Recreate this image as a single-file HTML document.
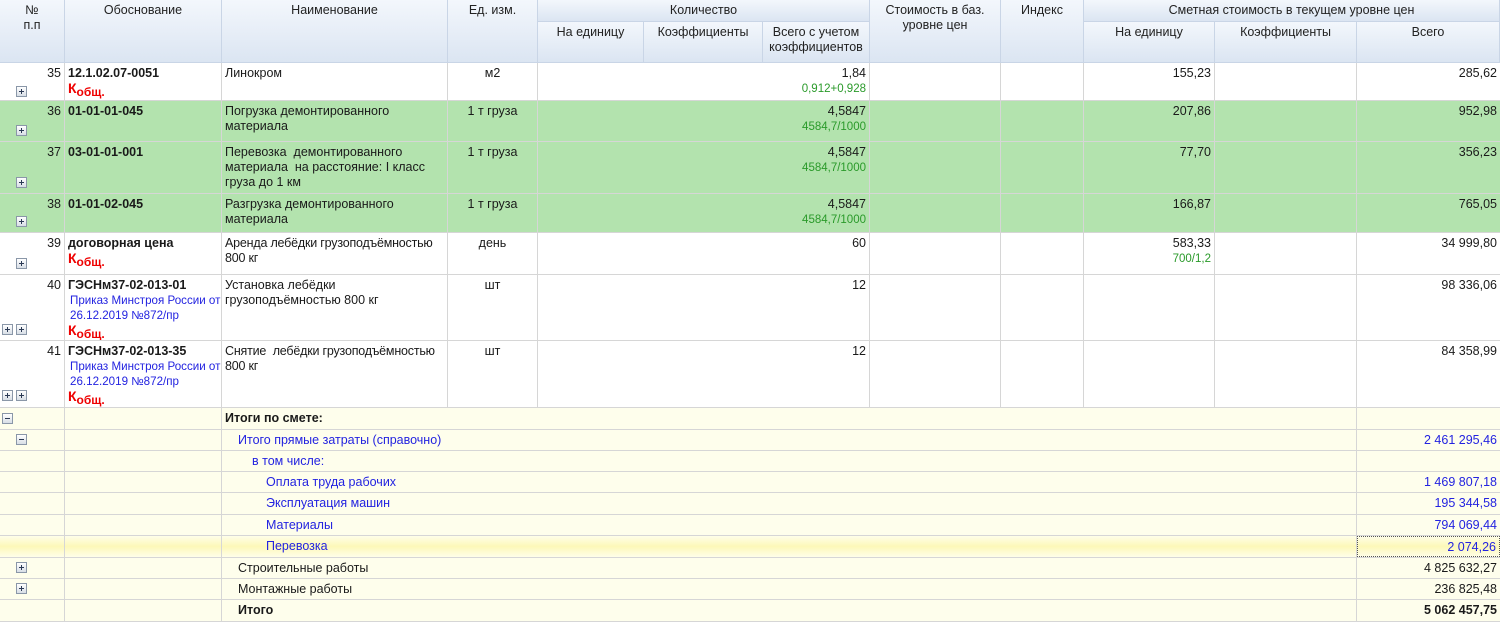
<!DOCTYPE html>
<html><head><meta charset="utf-8">
<style>
*{margin:0;padding:0;box-sizing:border-box}
body{width:1500px;height:622px;overflow:hidden;background:#fff;font-family:"Liberation Sans",sans-serif;font-size:12.5px;color:#1a1a1a;position:relative}
.h{position:absolute;background:linear-gradient(#f3f7fc,#dbe5f2);border-right:1px solid #c9d5e6;border-bottom:1px solid #c9d5e6;text-align:center;color:#222;line-height:15px;padding-top:3px}
.r{position:absolute;left:0;width:1500px;border-bottom:1px solid #d6d6d6}
.c{position:absolute;top:0;bottom:0;border-right:1px solid #d6d6d6;line-height:15px;padding:3px 3px 0 3px;overflow:hidden}
.g{background:#b3e3ae}
.y{background:#fefeec}
.rt{text-align:right}.ct{text-align:center}
b{font-weight:bold}
.k{color:#e00;font-weight:bold;font-size:14px;display:inline-block;height:15px;line-height:14px}
.k sub{font-size:12px;vertical-align:-3px;line-height:0}
.gr{color:#2a9a2a;font-size:11.5px}
.bl{color:#2323e0}
.nw{white-space:nowrap;font-size:11.6px}
.p{position:absolute;width:11px;height:11px;border:1px solid #8a97a8;background:linear-gradient(#fff,#d8dee6)}
.p:before{content:"";position:absolute;left:2px;top:4px;width:5px;height:1px;background:#2b3a55}
.p.pl:after{content:"";position:absolute;left:4px;top:2px;width:1px;height:5px;background:#2b3a55}
</style></head><body>
<div class="h" style="left:0;top:0;width:65px;height:63px">№<br>п.п</div>
<div class="h" style="left:65px;top:0;width:157px;height:63px">Обоснование</div>
<div class="h" style="left:222px;top:0;width:226px;height:63px">Наименование</div>
<div class="h" style="left:448px;top:0;width:90px;height:63px">Ед. изм.</div>
<div class="h" style="left:538px;top:0;width:332px;height:22px">Количество</div>
<div class="h" style="left:538px;top:22px;width:106px;height:41px">На единицу</div>
<div class="h" style="left:644px;top:22px;width:119px;height:41px">Коэффициенты</div>
<div class="h" style="left:763px;top:22px;width:107px;height:41px">Всего с учетом<br>коэффициентов</div>
<div class="h" style="left:870px;top:0;width:131px;height:63px">Стоимость в баз.<br>уровне цен</div>
<div class="h" style="left:1001px;top:0;width:83px;height:63px">Индекс</div>
<div class="h" style="left:1084px;top:0;width:416px;height:22px">Сметная стоимость в текущем уровне цен</div>
<div class="h" style="left:1084px;top:22px;width:131px;height:41px">На единицу</div>
<div class="h" style="left:1215px;top:22px;width:142px;height:41px">Коэффициенты</div>
<div class="h" style="left:1357px;top:22px;width:143px;height:41px">Всего</div>

<div class="r" style="top:63px;height:38px">
<div class="c rt" style="left:0;width:65px">35</div>
<div class="c" style="left:65px;width:157px"><b>12.1.02.07-0051</b><br><span class="k">К<sub>общ.</sub></span></div>
<div class="c" style="left:222px;width:226px">Линокром</div>
<div class="c ct" style="left:448px;width:90px">м2</div>
<div class="c rt" style="left:538px;width:332px">1,84<br><span class="gr">0,912+0,928</span></div>
<div class="c" style="left:870px;width:131px"></div>
<div class="c" style="left:1001px;width:83px"></div>
<div class="c rt" style="left:1084px;width:131px">155,23</div>
<div class="c" style="left:1215px;width:142px"></div>
<div class="c rt" style="left:1357px;width:143px;border:0">285,62</div>
</div>
<div class="p pl" style="left:16px;top:86px"></div>

<div class="r g" style="top:101px;height:41px">
<div class="c rt" style="left:0;width:65px">36</div>
<div class="c" style="left:65px;width:157px"><b>01-01-01-045</b></div>
<div class="c" style="left:222px;width:226px">Погрузка демонтированного материала</div>
<div class="c ct" style="left:448px;width:90px">1 т груза</div>
<div class="c rt" style="left:538px;width:332px">4,5847<br><span class="gr">4584,7/1000</span></div>
<div class="c" style="left:870px;width:131px"></div>
<div class="c" style="left:1001px;width:83px"></div>
<div class="c rt" style="left:1084px;width:131px">207,86</div>
<div class="c" style="left:1215px;width:142px"></div>
<div class="c rt" style="left:1357px;width:143px;border:0">952,98</div>
</div>
<div class="p pl" style="left:16px;top:125px"></div>

<div class="r g" style="top:142px;height:52px">
<div class="c rt" style="left:0;width:65px">37</div>
<div class="c" style="left:65px;width:157px"><b>03-01-01-001</b></div>
<div class="c" style="left:222px;width:226px">Перевозка&nbsp; демонтированного материала&nbsp; на расстояние: I класс груза до 1 км</div>
<div class="c ct" style="left:448px;width:90px">1 т груза</div>
<div class="c rt" style="left:538px;width:332px">4,5847<br><span class="gr">4584,7/1000</span></div>
<div class="c" style="left:870px;width:131px"></div>
<div class="c" style="left:1001px;width:83px"></div>
<div class="c rt" style="left:1084px;width:131px">77,70</div>
<div class="c" style="left:1215px;width:142px"></div>
<div class="c rt" style="left:1357px;width:143px;border:0">356,23</div>
</div>
<div class="p pl" style="left:16px;top:177px"></div>

<div class="r g" style="top:194px;height:39px">
<div class="c rt" style="left:0;width:65px">38</div>
<div class="c" style="left:65px;width:157px"><b>01-01-02-045</b></div>
<div class="c" style="left:222px;width:226px">Разгрузка демонтированного материала</div>
<div class="c ct" style="left:448px;width:90px">1 т груза</div>
<div class="c rt" style="left:538px;width:332px">4,5847<br><span class="gr">4584,7/1000</span></div>
<div class="c" style="left:870px;width:131px"></div>
<div class="c" style="left:1001px;width:83px"></div>
<div class="c rt" style="left:1084px;width:131px">166,87</div>
<div class="c" style="left:1215px;width:142px"></div>
<div class="c rt" style="left:1357px;width:143px;border:0">765,05</div>
</div>
<div class="p pl" style="left:16px;top:216px"></div>

<div class="r" style="top:233px;height:42px">
<div class="c rt" style="left:0;width:65px">39</div>
<div class="c" style="left:65px;width:157px"><b>договорная цена</b><br><span class="k">К<sub>общ.</sub></span></div>
<div class="c" style="left:222px;width:226px;letter-spacing:-0.2px">Аренда лебёдки грузоподъёмностью 800 кг</div>
<div class="c ct" style="left:448px;width:90px">день</div>
<div class="c rt" style="left:538px;width:332px">60</div>
<div class="c" style="left:870px;width:131px"></div>
<div class="c" style="left:1001px;width:83px"></div>
<div class="c rt" style="left:1084px;width:131px">583,33<br><span class="gr">700/1,2</span></div>
<div class="c" style="left:1215px;width:142px"></div>
<div class="c rt" style="left:1357px;width:143px;border:0">34 999,80</div>
</div>
<div class="p pl" style="left:16px;top:258px"></div>

<div class="r" style="top:275px;height:66px">
<div class="c rt" style="left:0;width:65px">40</div>
<div class="c" style="left:65px;width:157px"><b>ГЭСНм37-02-013-01</b><br><span class="bl nw" style="padding-left:2px">Приказ Минстроя России от</span><br><span class="bl nw" style="padding-left:2px">26.12.2019 №872/пр</span><br><span class="k">К<sub>общ.</sub></span></div>
<div class="c" style="left:222px;width:226px">Установка лебёдки грузоподъёмностью 800 кг</div>
<div class="c ct" style="left:448px;width:90px">шт</div>
<div class="c rt" style="left:538px;width:332px">12</div>
<div class="c" style="left:870px;width:131px"></div>
<div class="c" style="left:1001px;width:83px"></div>
<div class="c" style="left:1084px;width:131px"></div>
<div class="c" style="left:1215px;width:142px"></div>
<div class="c rt" style="left:1357px;width:143px;border:0">98 336,06</div>
</div>
<div class="p pl" style="left:2px;top:324px"></div><div class="p pl" style="left:16px;top:324px"></div>

<div class="r" style="top:341px;height:67px">
<div class="c rt" style="left:0;width:65px">41</div>
<div class="c" style="left:65px;width:157px"><b>ГЭСНм37-02-013-35</b><br><span class="bl nw" style="padding-left:2px">Приказ Минстроя России от</span><br><span class="bl nw" style="padding-left:2px">26.12.2019 №872/пр</span><br><span class="k">К<sub>общ.</sub></span></div>
<div class="c" style="left:222px;width:226px;letter-spacing:-0.2px">Снятие&nbsp; лебёдки грузоподъёмностью 800 кг</div>
<div class="c ct" style="left:448px;width:90px">шт</div>
<div class="c rt" style="left:538px;width:332px">12</div>
<div class="c" style="left:870px;width:131px"></div>
<div class="c" style="left:1001px;width:83px"></div>
<div class="c" style="left:1084px;width:131px"></div>
<div class="c" style="left:1215px;width:142px"></div>
<div class="c rt" style="left:1357px;width:143px;border:0">84 358,99</div>
</div>
<div class="p pl" style="left:2px;top:390px"></div><div class="p pl" style="left:16px;top:390px"></div>

<div class="r y" style="top:408px;height:22px"><div class="c" style="left:0;width:65px"></div><div class="c" style="left:65px;width:157px"></div><div class="c" style="left:222px;width:1135px"><b>Итоги по смете:</b></div></div>
<div class="p" style="left:2px;top:413px"></div>
<div class="r y" style="top:430px;height:21px"><div class="c" style="left:0;width:65px"></div><div class="c" style="left:65px;width:157px"></div><div class="c bl" style="left:222px;width:1135px;padding-left:16px">Итого прямые затраты (справочно)</div><div class="c rt bl" style="left:1357px;width:143px;border:0">2 461 295,46</div></div>
<div class="p" style="left:16px;top:434px"></div>
<div class="r y" style="top:451px;height:21px"><div class="c" style="left:0;width:65px"></div><div class="c" style="left:65px;width:157px"></div><div class="c bl" style="left:222px;width:1135px;padding-left:30px">в том числе:</div></div>
<div class="r y" style="top:472px;height:21px"><div class="c" style="left:0;width:65px"></div><div class="c" style="left:65px;width:157px"></div><div class="c bl" style="left:222px;width:1135px;padding-left:44px">Оплата труда рабочих</div><div class="c rt bl" style="left:1357px;width:143px;border:0">1 469 807,18</div></div>
<div class="r y" style="top:493px;height:22px"><div class="c" style="left:0;width:65px"></div><div class="c" style="left:65px;width:157px"></div><div class="c bl" style="left:222px;width:1135px;padding-left:44px">Эксплуатация машин</div><div class="c rt bl" style="left:1357px;width:143px;border:0">195 344,58</div></div>
<div class="r y" style="top:515px;height:21px"><div class="c" style="left:0;width:65px"></div><div class="c" style="left:65px;width:157px"></div><div class="c bl" style="left:222px;width:1135px;padding-left:44px">Материалы</div><div class="c rt bl" style="left:1357px;width:143px;border:0">794 069,44</div></div>
<div class="r" style="top:536px;height:22px;background:linear-gradient(#fefee9,#fdf8b8 50%,#fefee9)"><div class="c" style="left:0;width:65px"></div><div class="c" style="left:65px;width:157px"></div><div class="c bl" style="left:222px;width:1135px;padding-left:44px">Перевозка</div><div class="c rt bl" style="left:1357px;width:143px;border:1px dotted #555">2 074,26</div></div>
<div class="r y" style="top:558px;height:21px"><div class="c" style="left:0;width:65px"></div><div class="c" style="left:65px;width:157px"></div><div class="c" style="left:222px;width:1135px;padding-left:16px">Строительные работы</div><div class="c rt" style="left:1357px;width:143px;border:0">4 825 632,27</div></div>
<div class="p pl" style="left:16px;top:562px"></div>
<div class="r y" style="top:579px;height:21px"><div class="c" style="left:0;width:65px"></div><div class="c" style="left:65px;width:157px"></div><div class="c" style="left:222px;width:1135px;padding-left:16px">Монтажные работы</div><div class="c rt" style="left:1357px;width:143px;border:0">236 825,48</div></div>
<div class="p pl" style="left:16px;top:583px"></div>
<div class="r y" style="top:600px;height:22px"><div class="c" style="left:0;width:65px"></div><div class="c" style="left:65px;width:157px"></div><div class="c" style="left:222px;width:1135px;padding-left:16px"><b>Итого</b></div><div class="c rt" style="left:1357px;width:143px;border:0"><b>5 062 457,75</b></div></div>
</body></html>
